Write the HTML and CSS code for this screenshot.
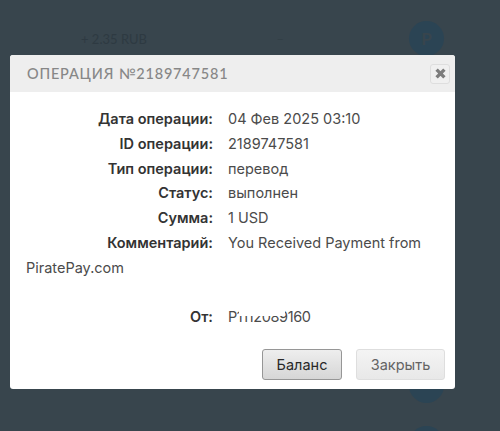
FILE: index.html
```html
<!DOCTYPE html>
<html>

  <head>
    <title>Операция</title>
    <link rel="stylesheet" href="styles.css">
  </head>

  <body>
    <div class="history">
      <div class="history-row">
        <span class="history-amount">+ 2.35 RUB</span>
        <span class="history-dash">—</span>
        <span class="history-icon">P</span>
      </div>
      <div class="history-row history-row-low">
        <span class="history-icon"></span>
      </div>
      <div class="history-row history-row-last">
        <span class="history-icon"></span>
      </div>
    </div>

    <div class="modal">
      <div class="modal-header">
        <span class="modal-title">ОПЕРАЦИЯ №2189747581</span>
        <button class="close-button">
          <svg class="close-icon" viewBox="0 0 10 10">
            <path d="M2 2 L8 8 M8 2 L2 8" />
          </svg>
        </button>
      </div>

      <div class="modal-body">
        <p class="line"><b class="label">Дата операции:</b>04 Фев 2025 03:10</p>
        <p class="line"><b class="label">ID операции:</b>2189747581</p>
        <p class="line"><b class="label">Тип операции:</b>перевод</p>
        <p class="line"><b class="label">Статус:</b>выполнен</p>
        <p class="line"><b class="label">Сумма:</b>1 USD</p>
        <p class="line"><b class="label">Комментарий:</b>You Received Payment from PiratePay.com</p>
        <p class="line">&nbsp;</p>
        <p class="line"><b class="label">От:</b><span class="from-value">P1112089160<span class="from-smudge"></span></span></p>
      </div>

      <div class="modal-footer">
        <button class="button button-active">Баланс</button>
        <button class="button">Закрыть</button>
      </div>
    </div>
  </body>

</html>
```

FILE: styles.css
```css
body{
  margin: 0;
  background-color: rgb(56, 69, 77);
  font-family: Inter, "Open Sans", sans-serif;
}

/* page behind the overlay */
.history{
  box-sizing: border-box;
  height: 431px;
  overflow: hidden;
  padding: 21px 56px 0 81px;
}
.history-row{
  display: flex;
  align-items: center;
  height: 35px;
  color: rgb(46, 58, 66);
  font-family: Lato, sans-serif;
  font-size: 13px;
}
.history-amount{
  width: 196px;
}
.history-dash{
  flex: 1;
  font-size: 8px;
}
.history-icon{
  width: 35px;
  height: 35px;
  border-radius: 50%;
  background-color: rgb(43, 68, 84);
  color: rgb(56, 69, 77);
  font-size: 17px;
  font-weight: bold;
  line-height: 35px;
  text-align: center;
}
.history-row-low{
  justify-content: flex-end;
  margin-top: 312px;
}
.history-row-last{
  justify-content: flex-end;
  margin-top: 23px;
}

.modal{
  position: absolute;
  left: 10px;
  top: 55px;
  width: 445px;
  height: 334px;
  background-color: white;
  border-radius: 3px;
  overflow: hidden;
}

.modal-header{
  display: flex;
  align-items: center;
  justify-content: space-between;
  height: 37px;
  padding: 0 5px 0 17px;
  background-color: rgb(238, 238, 238);
}
.modal-title{
  color: rgb(135, 135, 135);
  font-family: Lato, sans-serif;
  font-size: 14.5px;
  font-weight: 500;
  letter-spacing: 0.8px;
}
.close-button{
  width: 20px;
  height: 20px;
  padding: 0;
  border: 1px solid rgb(222, 222, 222);
  border-radius: 3px;
  background-color: rgb(240, 240, 240);
}
.close-icon{
  display: block;
  width: 13px;
  height: 13px;
  margin: 0 auto;
}
.close-icon path{
  stroke: rgb(125, 125, 125);
  stroke-width: 2.6;
}

.modal-body{
  height: 242px;
  padding: 15px 22px 0 16px;
  color: rgb(75, 75, 75);
  font-size: 14.5px;
}
.line{
  margin: 0;
  line-height: 24.75px;
}
.label{
  float: left;
  width: 187px;
  margin-right: 15px;
  color: rgb(51, 51, 51);
  font-weight: 600;
  text-align: right;
}
.from-value{
  position: relative;
  letter-spacing: -0.4px;
}
/* the number is partly wiped out in the screenshot */
.from-smudge{
  position: absolute;
  left: 11px;
  top: 2px;
  width: 46px;
  height: 6px;
  background-color: white;
}

.modal-footer{
  display: flex;
  justify-content: flex-end;
  gap: 14px;
  padding-right: 10px;
}
.button{
  width: 89px;
  height: 31px;
  border: 1px solid rgb(222, 222, 222);
  border-radius: 3px;
  background: linear-gradient(rgb(244, 244, 244), rgb(232, 232, 232));
  color: rgb(100, 100, 100);
  font-family: Inter, sans-serif;
  font-size: 14.5px;
}
.button-active{
  width: 80px;
  border-color: rgb(150, 150, 150);
  background: linear-gradient(rgb(238, 238, 238), rgb(214, 214, 214));
  color: rgb(40, 40, 40);
}
```
